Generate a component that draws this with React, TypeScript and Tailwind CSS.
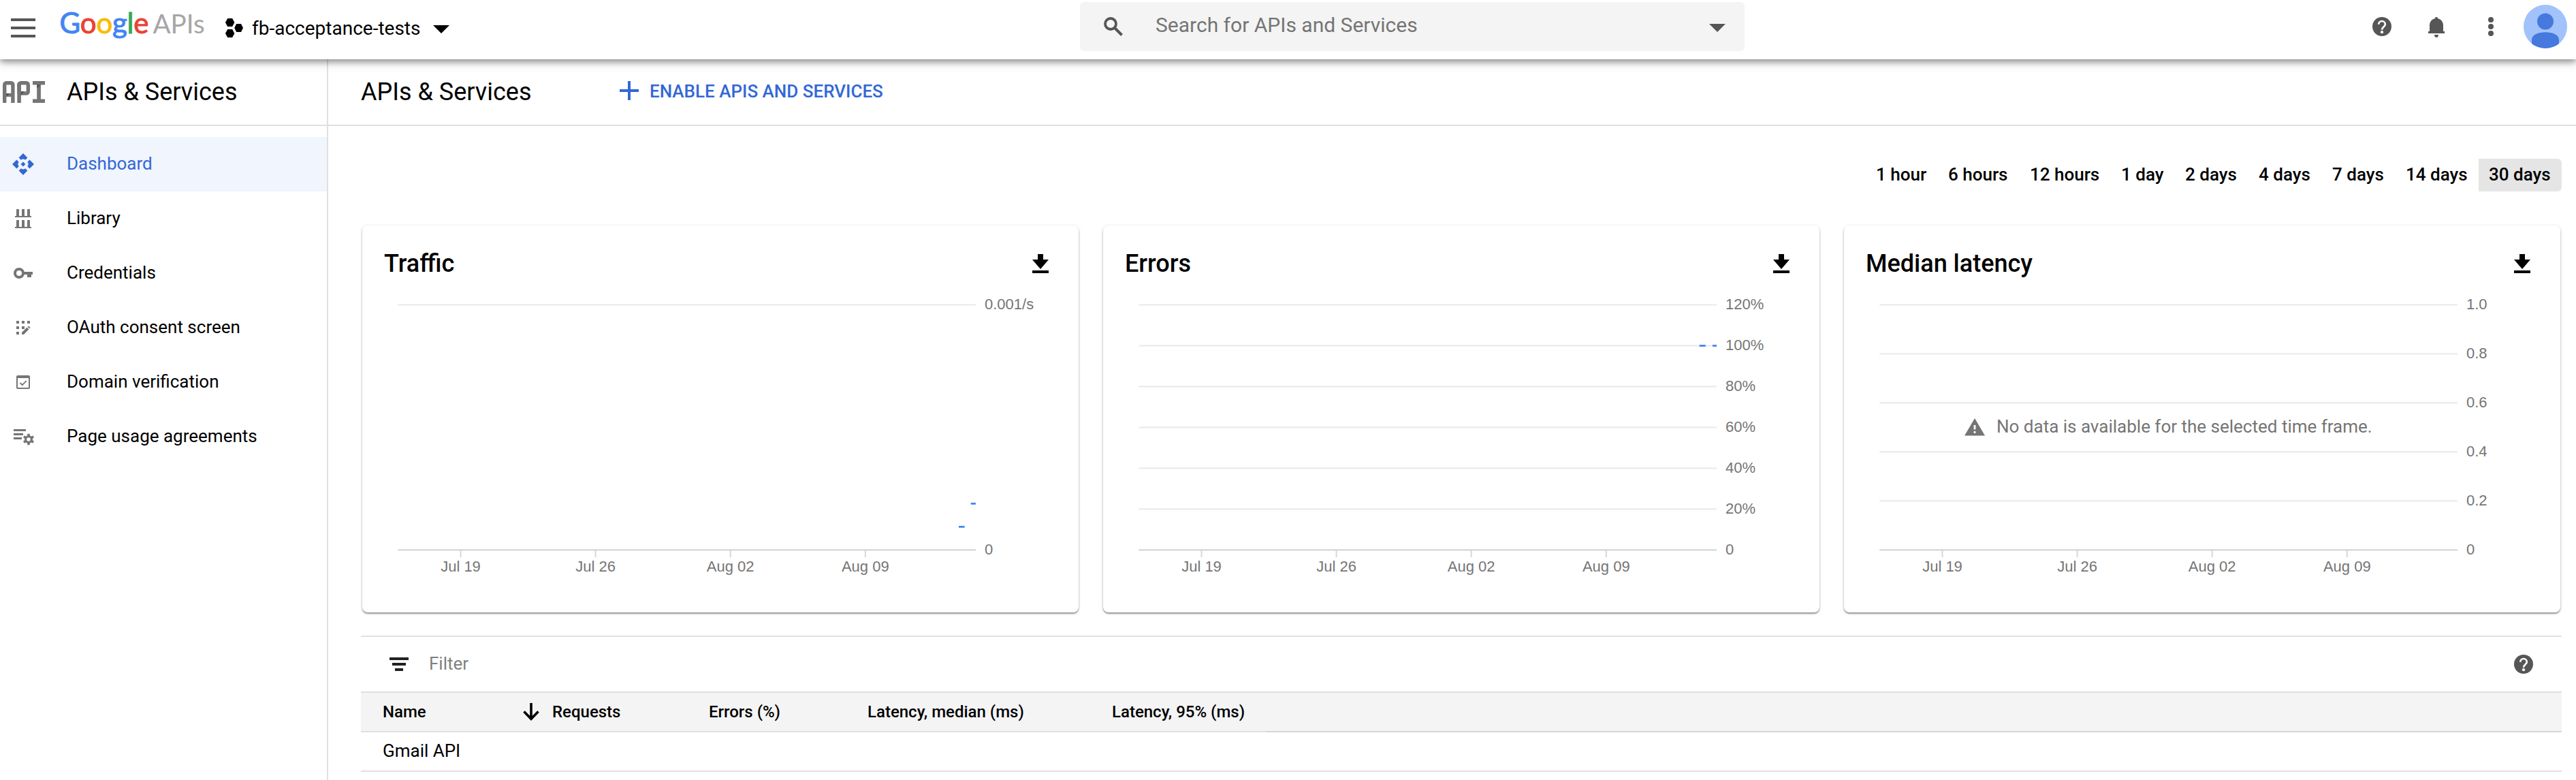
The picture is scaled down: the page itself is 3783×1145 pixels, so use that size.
import type { ReactNode } from "react";

const NAV: { label: string; icon: ReactNode; active?: boolean }[] = [
  {
    label: "Dashboard",
    active: true,
    icon: (
      <g>
        {[0, 90, 180, 270].map((a) => (
          <path key={a} transform={`rotate(${a} 18 18)`} d="M18 2l6.4 6.5-3.2 3.2q-3.2-2.6-6.4 0l-3.2-3.2z" />
        ))}
        <path d="M18 14.5l3.5 3.5-3.5 3.5-3.5-3.5z" />
      </g>
    ),
  },
  {
    label: "Library",
    icon: <path d="M8 4h4v10h4V4h4v10h4V4h4v10h2v2H6v-2h2zM8 20h4v10h4V20h4v10h4V20h4v10h2v2H6v-2h2z" />,
  },
  {
    label: "Credentials",
    icon: (
      <g>
        <circle cx="12" cy="18" r="6" fill="none" stroke="currentColor" strokeWidth="4" />
        <path d="M19 16h13v4h-2v4h-6v-4h-5z" />
      </g>
    ),
  },
  {
    label: "OAuth consent screen",
    icon: (
      <g>
        <path d="M8 8h4v4H8zM16 8h4v4h-4zM24 8h4v4h-4zM8 16h4v4H8zM16 16h4v4h-4zM8 24h4v4H8z" />
        <path d="M16 28v-3l7.6-7.4 2.8 2.8L19 28zM24.6 16.8l1.4-1.4 2.6 2.6-1.4 1.5z" />
      </g>
    ),
  },
  {
    label: "Domain verification",
    icon: (
      <g>
        <path fillRule="evenodd" d="M10 8h16a2 2 0 0 1 2 2v16a2 2 0 0 1-2 2H10a2 2 0 0 1-2-2V10a2 2 0 0 1 2-2zm0 4v14h16V12z" />
        <path d="M13.5 19l3.2 3.2 6-6" fill="none" stroke="currentColor" strokeWidth="1.8" />
      </g>
    ),
  },
  {
    label: "Page usage agreements",
    icon: (
      <g>
        <path d="M4 7h18v3H4zM4 13h14v3H4zM4 19h12v3H4z" />
        <circle cx="26" cy="22" r="4.4" fill="none" stroke="currentColor" strokeWidth="3.2" />
        {[30, 90, 150, 210, 270, 330].map((a) => (
          <rect key={a} x="24.2" y="13.8" width="3.6" height="3.6" transform={`rotate(${a + 30} 26 22)`} />
        ))}
      </g>
    ),
  },
];

const RANGES = [
  { label: "1 hour", w: "w-[106px]" },
  { label: "6 hours", w: "w-[120px]" },
  { label: "12 hours", w: "w-[134px]" },
  { label: "1 day", w: "w-[94px]" },
  { label: "2 days", w: "w-[108px]" },
  { label: "4 days", w: "w-[108px]" },
  { label: "7 days", w: "w-[108px]" },
  { label: "14 days", w: "w-[122px]" },
  { label: "30 days", w: "w-[122px] bg-[#e5e5e5] rounded-r-md" },
];

const LOGO: [string, string][] = [
  ["G", "#4285f4"],
  ["o", "#ea4335"],
  ["o", "#fbbc05"],
  ["g", "#4285f4"],
  ["l", "#34a853"],
  ["e", "#ea4335"],
];

const DATES = ["Jul 19", "Jul 26", "Aug 02", "Aug 09"];

// Plot area inside the 1052px wide card
const TOP = 17.5;
const AXIS = 377.3;

function HelpIcon() {
  return (
    <svg width="28" height="28" viewBox="0 0 28 28" className="block">
      <circle cx="14" cy="14" r="14" fill="#565656" />
      <path d="M9.2 10.8a4.8 4.8 0 0 1 9.6 0c0 3.6-4.8 4-4.8 7.9" fill="none" stroke="#fff" strokeWidth="2.7" />
      <circle cx="14" cy="22.2" r="2.1" fill="#fff" />
    </svg>
  );
}

function Caret({ color }: { color: string }) {
  return (
    <svg width="24" height="12" viewBox="0 0 24 12" className="block">
      <polygon points="0,0 24,0 12,12" fill={color} />
    </svg>
  );
}

function Header() {
  return (
    <header className="relative z-10 flex h-[87px] bg-white shadow-[0_4px_8px_rgba(0,0,0,0.3),0_2px_16px_rgba(0,0,0,0.25)]">
      <div className="flex h-[87px] w-[1586px] items-start">
        <div className="mt-[27px] ml-4 flex w-9 flex-col gap-2">
          <div className="h-1 bg-[#565656]" />
          <div className="h-1 bg-[#565656]" />
          <div className="h-1 bg-[#565656]" />
        </div>
        <svg width="222" height="70" viewBox="0 0 222 70" className="ml-8 block">
          <text x="3.5" y="48.700" fontFamily="Lato, sans-serif" fontSize="42" fontWeight="400" textLength="131" strokeWidth="1">
            {LOGO.map(([ch, color], i) => (
              <tspan key={i} fill={color} stroke={color}>
                {ch}
              </tspan>
            ))}
          </text>
          <text x="140.5" y="49" fontFamily="Lato, sans-serif" fontSize="38.6" fill="#a6a6a6">
            APIs
          </text>
        </svg>
        <svg width="26" height="28" viewBox="0 0 26 28" className="mt-[27px] ml-[25px] block">
          <polygon points="3.2,0 10.2,0 13.4,6 10.2,12 3.2,12 0,6" />
          <polygon points="3.2,16 10.2,16 13.4,22 10.2,28 3.2,28 0,22" />
          <polygon points="16.2,8 23,8 26,14 23,20 16.2,20 13.2,14" />
        </svg>
        <div className="mt-[25px] ml-[13px] w-[266px] text-[28px] leading-[33px] whitespace-nowrap">fb-acceptance-tests</div>
        <div className="mt-[37px]">
          <Caret color="#000" />
        </div>
      </div>
      <div className="mt-[3px] flex h-[72px] w-[976px] items-start rounded-md bg-[#f4f4f4]">
        <svg width="28" height="28" viewBox="0 0 28 28" className="mt-[22px] ml-[35px] block">
          <circle cx="10" cy="10" r="8" fill="none" stroke="#565656" strokeWidth="3.8" />
          <path d="M15.5 15.5l11 11" stroke="#565656" strokeWidth="4" />
        </svg>
        <div className="mt-4 ml-12 w-[813px] text-[30px] leading-[35px] text-[#757575]">Search for APIs and Services</div>
        <div className="mt-8">
          <Caret color="#565656" />
        </div>
      </div>
      <div className="ml-auto flex items-start pr-[13px] pt-[7px]">
        <div className="mt-[18px]">
          <HelpIcon />
        </div>
        <svg width="24" height="30" viewBox="0 0 24 30" className="mt-[18px] ml-[54px] block" fill="#565656">
          <path d="M12 0a2.3 2.3 0 0 1 2.3 2.2C19 3.4 22 7.2 22 12v9h2v3H0v-3h2v-9C2 7.2 5 3.4 9.7 2.2A2.3 2.3 0 0 1 12 0z" />
          <path d="M9 26h6c0 2.5-1.5 4-3 4s-3-1.5-3-4z" />
        </svg>
        <div className="mt-[18px] ml-16 flex w-2 flex-col gap-0.5">
          <div className="h-2 rounded-full bg-[#565656]" />
          <div className="h-2 rounded-full bg-[#565656]" />
          <div className="h-2 rounded-full bg-[#565656]" />
        </div>
        <svg width="64" height="64" viewBox="0 0 64 64" className="ml-11 block">
          <clipPath id="avatar">
            <circle cx="32" cy="32" r="32" />
          </clipPath>
          <g clipPath="url(#avatar)">
            <rect width="64" height="64" fill="#a1c2fa" />
            <circle cx="32" cy="24.6" r="12" fill="#4579de" />
            <path d="M12 64V51.5C12 44 22 40.3 32 40.3S52 44 52 51.5V64z" fill="#4579de" />
          </g>
        </svg>
      </div>
    </header>
  );
}

function ApiMark() {
  return (
    <svg width="62" height="32" viewBox="0 0 62 32" className="block" fill="#757575">
      <rect x="2.7" y="2.7" width="12.2" height="40" rx="2.5" fill="none" stroke="#757575" strokeWidth="5.4" />
      <rect x="3" y="18" width="12" height="5" />
      <rect x="24" y="2.7" width="13.3" height="15.3" rx="2.5" fill="none" stroke="#757575" strokeWidth="5.4" />
      <rect x="21.3" y="3" width="5.6" height="29" />
      <rect x="44" y="0" width="18" height="5.5" />
      <rect x="44" y="26.5" width="18" height="5.5" />
      <rect x="50.2" y="0" width="5.7" height="32" />
      <polygon points="5.4,18 10,18 5.4,23" fill="#555" />
      <polygon points="26.9,15.3 32,15.3 26.9,21" fill="#555" />
      <polygon points="50.2,5.5 55.9,5.5 50.2,11" fill="#555" />
    </svg>
  );
}

function Sidebar() {
  return (
    <aside className="h-[1058px] w-[482px] shrink-0 border-r-2 border-[#e0e0e0]">
      <div className="flex h-[98px] items-center border-b-2 border-[#e0e0e0]">
        <div className="ml-1 w-[94px]">
          <ApiMark />
        </div>
        <div className="text-[36px] leading-[42px]">APIs &amp; Services</div>
      </div>
      <nav className="pt-4">
        {NAV.map((n) => (
          <div
            key={n.label}
            className={
              n.active
                ? "flex h-20 items-center bg-[#f0f5fe] pl-4 text-[#3367d6]"
                : "flex h-20 items-center pl-4 text-[#757575]"
            }
          >
            <svg width="36" height="36" viewBox="0 0 36 36" fill="currentColor" className="block shrink-0">
              {n.icon}
            </svg>
            <div
              className={
                n.active
                  ? "ml-[46px] pb-0.5 text-[26px] leading-[30px]"
                  : "ml-[46px] pb-0.5 text-[26px] leading-[30px] text-black"
              }
            >
              {n.label}
            </div>
          </div>
        ))}
      </nav>
    </aside>
  );
}

function ChartCard({
  title,
  ticks,
  marks,
  message,
}: {
  title: string;
  ticks: string[];
  marks: [number, number, number][];
  message?: string;
}) {
  const step = (AXIS - TOP) / (ticks.length - 1);
  return (
    <section className="relative h-[568px] w-[1052px] rounded-lg bg-white shadow-[0_2px_2px_rgba(0,0,0,0.36),0_1px_5px_rgba(0,0,0,0.14)]">
      <div className="flex h-[99px] justify-between pt-[35px] pr-11 pl-8">
        <h2 className="text-[36px] leading-[42px] font-medium">{title}</h2>
        <svg width="24" height="28" viewBox="0 0 24 28" className="mt-[7px] block">
          <path d="M8 0h8v8h8L12 22 0 8h8zM0 24h24v4H0z" />
        </svg>
      </div>
      <svg width="1052" height="440" viewBox="0 0 1052 440" className="block" fontFamily="'Liberation Sans', Arial, sans-serif" fontSize="22" fill="#757575">
        {ticks.map((t, i) => {
          const y = TOP + step * i;
          const last = i === ticks.length - 1;
          return (
            <g key={t}>
              <rect x="52.3" y={y - 1} width="848.6" height="2" fill={last ? "#d0d0d0" : "#e9e9e9"} />
              <text x="914" y={y + 6.4}>
                {t}
              </text>
            </g>
          );
        })}
        {DATES.map((d, i) => (
          <g key={d}>
            <rect x={143.5 + 198.1 * i} y="378" width="2" height="10" fill="#d8d8d8" />
            <text x={144.5 + 198.1 * i} y="409" textAnchor="middle">
              {d}
            </text>
          </g>
        ))}
        {marks.map(([x, y, w]) => (
          <rect key={x} x={x} y={y - 1.4} width={w} height="2.8" fill="#4285f4" />
        ))}
      </svg>
      {message && (
        <div className="absolute top-[280px] left-[177px] flex items-start">
          <svg width="30" height="26" viewBox="0 0 30 26" className="mt-[3px] block">
            <path fillRule="evenodd" fill="#757575" d="M15 0l15 25.5H0zM13.6 10v6.5h2.8V10zm0 9v3h2.8v-3z" />
          </svg>
          <div className="ml-[17px] text-[26px] leading-[30px] whitespace-nowrap text-[#757575]">{message}</div>
        </div>
      )}
    </section>
  );
}

function ApiTable() {
  return (
    <section className="mt-[34px] ml-12 w-[3232px] border-t-2 border-[#e0e0e0]">
      <div className="flex h-20 items-start">
        <div className="mt-[30px] ml-[42px] flex w-7 flex-col items-center gap-1">
          <div className="h-1 w-7 bg-[#212121]" />
          <div className="h-1 w-5 bg-[#212121]" />
          <div className="h-1 w-3 bg-[#212121]" />
        </div>
        <div className="mt-6 ml-[30px] text-[26px] leading-[30px] text-[#808080]">Filter</div>
        <div className="mt-[26px] mr-[42px] ml-auto">
          <HelpIcon />
        </div>
      </div>
      <div className="flex h-[60px] border-t-2 border-[#e0e0e0] bg-[#f4f4f4] text-[24px] leading-7 font-medium whitespace-nowrap">
        <div className="flex w-[1330px] items-center border-b-2 border-[#e0e0e0]">
          <div className="w-[238px] pl-8">Name</div>
          <svg width="24" height="26" viewBox="0 0 24 26" className="block">
            <path d="M12 0v23M1.5 12.5L12 23.3l10.5-10.8" fill="none" stroke="#000" strokeWidth="3.6" />
          </svg>
          <div className="ml-[19px] w-[230px]">Requests</div>
          <div className="w-[233px]">Errors (%)</div>
          <div className="w-[359px]">Latency, median (ms)</div>
          <div>Latency, 95% (ms)</div>
        </div>
        <div className="flex-1 border-b-2 border-[#d5d5d5]" />
      </div>
      <div className="flex h-[58px] items-center border-b-2 border-[#e0e0e0]">
        <div className="pb-0.5 pl-8 text-[26px] leading-[30px]">Gmail API</div>
      </div>
    </section>
  );
}

export default function App() {
  return (
    <div className="h-[1145px] w-[3783px] overflow-hidden bg-white text-black font-[Roboto,sans-serif]">
      <Header />
      <div className="flex">
        <Sidebar />
        <main className="w-[3301px]">
          <div className="flex h-[98px] items-center border-b-2 border-[#e0e0e0] pl-12">
            <h1 className="w-[380px] text-[36px] leading-[42px]">APIs &amp; Services</h1>
            <svg width="28" height="28" viewBox="0 0 28 28" className="mb-1 block">
              <path d="M12 0h4v12h12v4H16v12h-4V16H0v-4h12z" fill="#3367d6" />
            </svg>
            <div className="ml-4 pb-0.5 text-[26px] leading-[30px] font-medium text-[#3367d6]">ENABLE APIS AND SERVICES</div>
          </div>
          <div className="mt-12 flex justify-end pr-[21px]">
            {RANGES.map((r) => (
              <div key={r.label} className={`flex h-12 items-center pl-[15px] text-[26px] leading-[30px] font-medium whitespace-nowrap ${r.w}`}>
                <span className="pb-0.5">{r.label}</span>
              </div>
            ))}
          </div>
          <div className="mt-[50px] ml-[50px] flex gap-9">
            <ChartCard title="Traffic" ticks={["0.001/s", "0"]} marks={[[893.7, 309.3, 7.2], [876, 343.3, 8.6]]} />
            <ChartCard title="Errors" ticks={["120%", "100%", "80%", "60%", "40%", "20%", "0"]} marks={[[875.7, 77.5, 9], [895, 77.5, 6]]} />
            <ChartCard
              title="Median latency"
              ticks={["1.0", "0.8", "0.6", "0.4", "0.2", "0"]}
              marks={[]}
              message="No data is available for the selected time frame."
            />
          </div>
          <ApiTable />
        </main>
      </div>
    </div>
  );
}
